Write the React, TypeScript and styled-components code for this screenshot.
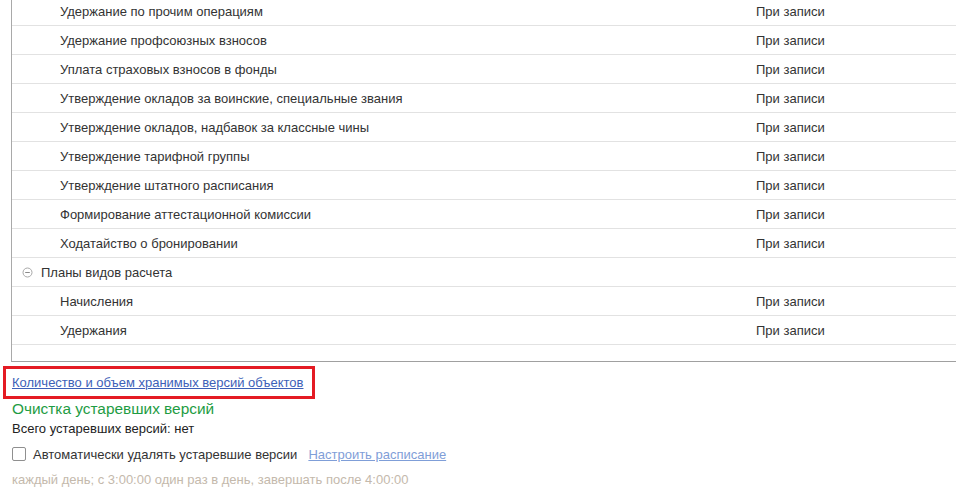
import styled, { createGlobalStyle } from 'styled-components'

const GlobalStyle = createGlobalStyle`
	html, body {
		margin: 0;
		padding: 0;
		background: #fff;
		overflow: hidden;
	}
	body {
		font-family: 'Liberation Sans', Arial, sans-serif;
		font-size: 13px;
		color: #333;
	}
`

type Row = { name: string; mode?: string; group?: boolean }

const rows: Row[] = [
	{ name: 'Удержание по прочим операциям', mode: 'При записи' },
	{ name: 'Удержание профсоюзных взносов', mode: 'При записи' },
	{ name: 'Уплата страховых взносов в фонды', mode: 'При записи' },
	{ name: 'Утверждение окладов за воинские, специальные звания', mode: 'При записи' },
	{ name: 'Утверждение окладов, надбавок за классные чины', mode: 'При записи' },
	{ name: 'Утверждение тарифной группы', mode: 'При записи' },
	{ name: 'Утверждение штатного расписания', mode: 'При записи' },
	{ name: 'Формирование аттестационной комиссии', mode: 'При записи' },
	{ name: 'Ходатайство о бронировании', mode: 'При записи' },
	{ name: 'Планы видов расчета', group: true },
	{ name: 'Начисления', mode: 'При записи' },
	{ name: 'Удержания', mode: 'При записи' },
]

function CollapseIcon() {
	return (
		<svg width='11' height='11' viewBox='0 0 11 11'>
			<circle cx='5.5' cy='5.5' r='4.5' fill='none' stroke='#a8a8a8' strokeWidth='1' />
			<path d='M3.2 5.5h4.6' stroke='#8a8a8a' strokeWidth='1' />
		</svg>
	)
}

export default function App() {
	return (
		<Page>
			<GlobalStyle />
			<Table>
				{rows.map((row) => (
					<TableRow key={row.name}>
						<NameCell $group={row.group}>
							{row.group && <CollapseIcon />}
							{row.name}
						</NameCell>
						<ModeCell>{row.mode}</ModeCell>
					</TableRow>
				))}
				<Filler />
			</Table>

			<Marked>
				<SettingsLink href='#'>Количество и объем хранимых версий объектов</SettingsLink>
			</Marked>

			<Section>
				<SectionTitle>Очистка устаревших версий</SectionTitle>
				<Info>Всего устаревших версий: нет</Info>
				<CheckRow>
					<CheckBox />
					<span>Автоматически удалять устаревшие версии</span>
					<ScheduleLink href='#'>Настроить расписание</ScheduleLink>
				</CheckRow>
				<Hint>каждый день; с 3:00:00 один раз в день, завершать после 4:00:00</Hint>
			</Section>
		</Page>
	)
}

const Page = styled.div`
	width: 956px;
	height: 489px;
	display: flex;
	flex-direction: column;
`

const Table = styled.div`
	margin-top: -3px;
	margin-left: 11px;
	border-left: 1px solid #a9a9a9;
	border-bottom: 1px solid #a0a0a0;
	display: flex;
	flex-direction: column;
`

const TableRow = styled.div`
	height: 28px;
	border-bottom: 1px solid #e2e2e2;
	display: grid;
	grid-template-columns: 744px 1fr;
	align-items: center;
	color: #333;
`

const NameCell = styled.div<{ $group?: boolean }>`
	display: flex;
	align-items: center;
	gap: 8px;
	padding-left: ${(p) => (p.$group ? '10px' : '48px')};
	white-space: nowrap;
`

const ModeCell = styled.div`
	white-space: nowrap;
`

const Filler = styled.div`
	height: 16px;
`

const Marked = styled.div`
	box-sizing: border-box;
	margin: 4px 0 0 3px;
	width: 312px;
	height: 33px;
	border: 3px solid #e41b23;
	display: flex;
	align-items: center;
	padding-left: 6px;
`

const SettingsLink = styled.a`
	color: #3d5fb8;
	text-decoration: underline;
	white-space: nowrap;
`

const Section = styled.div`
	padding-left: 12px;
	display: flex;
	flex-direction: column;
`

const SectionTitle = styled.div`
	height: 20px;
	line-height: 20px;
	font-size: 15.4px;
	color: #1e9c43;
`

const Info = styled.div`
	margin-top: 1px;
	height: 18px;
	line-height: 18px;
	color: #222;
`

const CheckRow = styled.div`
	margin-top: 6px;
	height: 20px;
	display: flex;
	align-items: center;
	gap: 7px;
	color: #333;
	white-space: nowrap;
`

const CheckBox = styled.span`
	box-sizing: border-box;
	width: 14px;
	height: 14px;
	border: 1px solid #8f8f8f;
	border-radius: 2px;
	background: #fff;
`

const ScheduleLink = styled.a`
	margin-left: 4px;
	color: #7f9ed8;
	text-decoration: underline;
`

const Hint = styled.div`
	margin-top: 7px;
	height: 18px;
	line-height: 18px;
	color: #c4b9ac;
	white-space: nowrap;
`
